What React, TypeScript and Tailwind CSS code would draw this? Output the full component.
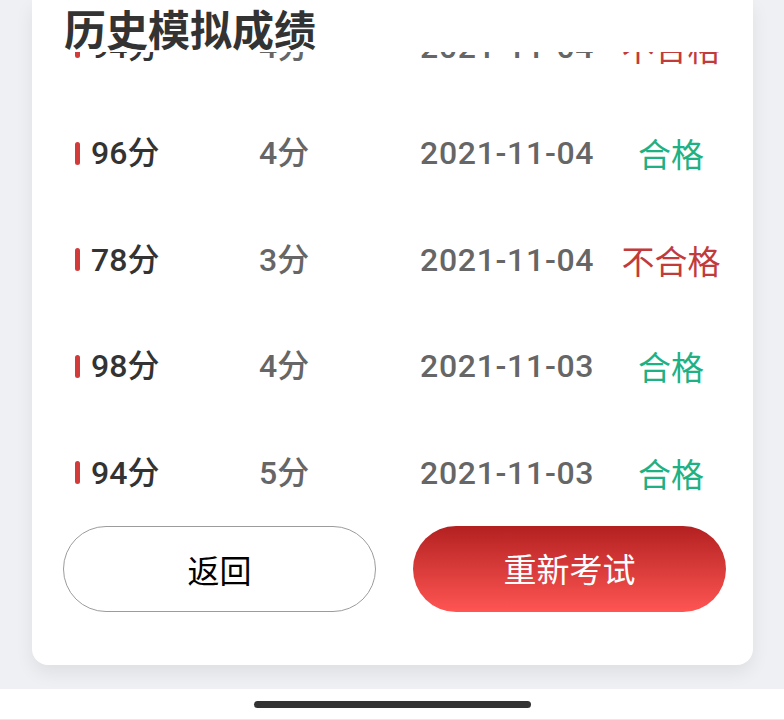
import React from "react";

type Row = { score: string; count: string; date: string; pass: boolean };

const rows: Row[] = [
  { score: "94分", count: "4分", date: "2021-11-04", pass: false },
  { score: "96分", count: "4分", date: "2021-11-04", pass: true },
  { score: "78分", count: "3分", date: "2021-11-04", pass: false },
  { score: "98分", count: "4分", date: "2021-11-03", pass: true },
  { score: "94分", count: "5分", date: "2021-11-03", pass: true },
];

const FONT = { fontFamily: 'Roboto, "Noto Sans CJK SC", sans-serif' };
const CJK = { fontFamily: '"Noto Sans CJK SC", sans-serif' };

export default function App() {
  return (
    <div className="w-[784px] h-[720px] bg-[#eff0f4] flex flex-col overflow-hidden" style={FONT}>
      <div className="ml-[32px] w-[721px] h-[665px] shrink-0 bg-white rounded-b-[16px] shadow-[0_8px_18px_rgba(0,0,0,0.07)] flex flex-col">
        <div className="h-[52px] shrink-0 pl-[32px] pt-[3px] text-[42px] leading-[49px] font-bold text-[#333333] whitespace-nowrap" style={CJK}>
          历史模拟成绩
        </div>
        <div className="h-[474px] shrink-0 overflow-hidden">
          <div className="-mt-[58.5px] flex flex-col">
            {rows.map((r, i) => (
              <div key={i} className="h-[106.5px] shrink-0 flex items-center pl-[43px] text-[32px] leading-[40px] whitespace-nowrap">
                <div className="w-[184px] flex items-center">
                  <div className="w-[5px] h-[23px] rounded-full bg-[#d33b3b]" />
                  <span className="ml-[11px] font-medium text-[#333333]">{r.score}</span>
                </div>
                <div className="w-[161px] font-medium text-[#666666]">{r.count}</div>
                <div className="w-[173px] font-medium text-[#666666] tracking-[0.7px]">{r.date}</div>
                <div
                  className={`w-[156px] text-center text-[33px] ${r.pass ? "text-[#1fb184]" : "text-[#c23b3b]"}`}
                  style={CJK}
                >
                  {r.pass ? "合格" : "不合格"}
                </div>
              </div>
            ))}
          </div>
        </div>
        <div className="flex pl-[31px] gap-[37px]">
          <div
            className="w-[313px] h-[86px] rounded-full border-[1.5px] border-[#9c9c9c] flex items-center justify-center text-[32px] text-black"
            style={CJK}
          >
            返回
          </div>
          <div
            className="w-[313px] h-[86px] rounded-full bg-gradient-to-b from-[#b32020] to-[#ff5553] flex items-center justify-center text-[33px] text-white"
            style={CJK}
          >
            重新考试
          </div>
        </div>
      </div>
      <div className="mt-[24px] h-[31px] bg-white border-b border-[#e8e8e8] flex justify-center pt-[12px]">
        <div className="w-[277px] h-[7px] rounded-full bg-[#333333]" />
      </div>
    </div>
  );
}
